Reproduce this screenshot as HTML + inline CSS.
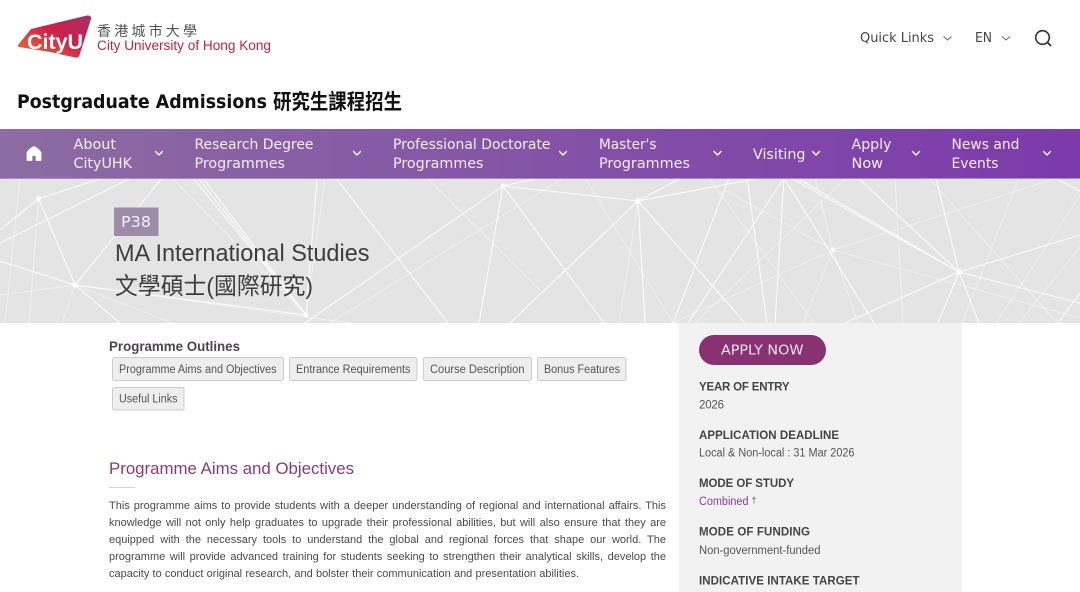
<!DOCTYPE html>
<html lang="en"><head><meta charset="utf-8"><title>MA International Studies</title>
<style>
html,body{margin:0;padding:0;background:#fff;width:1080px;height:592px;overflow:hidden}
svg{position:absolute;left:0;top:0;display:block}
.s{font-family:"Liberation Sans","Noto Sans CJK TC",sans-serif}
.m{font-family:"DejaVu Sans","Noto Sans CJK TC",sans-serif}
.n{font-family:"DejaVu Sans",sans-serif;font-size:14.5px;fill:#f4eef7}
.b{font-family:"Liberation Sans",sans-serif;font-size:11.5px;fill:#555}
.h{font-family:"Liberation Sans",sans-serif;font-size:11.5px;font-weight:700;fill:#444}
.v{font-family:"Liberation Sans",sans-serif;font-size:11.5px;fill:#555}
.c{fill:none;stroke:#fff;stroke-width:1.400;stroke-linecap:round;stroke-linejoin:round}
.p{position:absolute;left:109px;width:557px;height:17px;line-height:17px;font-family:"Liberation Sans",sans-serif;font-size:11px;color:#4a4a4a;white-space:nowrap;text-align:justify;text-align-last:justify}
</style></head><body>
<svg width="1080" height="592" viewBox="0 0 1080 592" xmlns="http://www.w3.org/2000/svg">
<defs>
<linearGradient id="lg" x1="0" y1="1" x2="1" y2="0"><stop offset="0" stop-color="#e8763a"/><stop offset=".55" stop-color="#cf2049"/><stop offset="1" stop-color="#a32f6d"/></linearGradient>
<linearGradient id="ng" x1="0" y1="0" x2="1" y2="0"><stop offset="0" stop-color="#8c6ca2"/><stop offset="1" stop-color="#7c3aab"/></linearGradient>
<clipPath id="hc"><rect x="0" y="179" width="1080" height="144"/></clipPath>
</defs>
<rect width="1080" height="592" fill="#fff"/>

<!-- logo -->
<path d="M18 45 L31 29 L87 15.500 Q91.500 15 91 19 L79.500 55 Q78.500 58.500 75 57.500 L50 52 L19 47 Q17 46 18 45Z" fill="url(#lg)"/>
<text class="s" x="27" y="49" font-size="21" font-weight="700" fill="#fff" textLength="56" lengthAdjust="spacingAndGlyphs">CityU</text>
<text class="s" x="97" y="36" font-size="14" fill="#555" textLength="100" lengthAdjust="spacing">香港城市大學</text>
<text class="s" x="97" y="50" font-size="13.500" fill="#c9213f" textLength="174" lengthAdjust="spacingAndGlyphs">City University of Hong Kong</text>

<!-- top links -->
<text class="m" x="860" y="42" font-size="13.500" fill="#444" textLength="74" lengthAdjust="spacingAndGlyphs">Quick Links</text>
<path d="M943.500 36.500l4 3.500 4-3.500" fill="none" stroke="#666" stroke-width="1"/>
<text class="m" x="975" y="42" font-size="13.500" fill="#444" textLength="17" lengthAdjust="spacingAndGlyphs">EN</text>
<path d="M1002 36.500l4 3.500 4-3.500" fill="none" stroke="#666" stroke-width="1"/>
<circle cx="1042.500" cy="37.500" r="6.800" fill="none" stroke="#333" stroke-width="1.600"/>
<path d="M1047.500 42.500l3.500 3.500" stroke="#333" stroke-width="1.800" fill="none"/>

<!-- title -->
<text class="m" x="17" y="108" font-size="19" font-weight="700" fill="#111" textLength="250" lengthAdjust="spacingAndGlyphs">Postgraduate Admissions</text>
<text class="s" x="273" y="109" font-size="21" font-weight="700" fill="#111" textLength="129" lengthAdjust="spacingAndGlyphs">研究生課程招生</text>

<!-- hero -->
<rect x="0" y="179" width="1080" height="144" fill="#e4e4e4"/>
<g clip-path="url(#hc)">
<g stroke="#fff" fill="none" stroke-width="1" stroke-opacity=".9">
<path d="M38.600 198.700L75 285M38.600 198.700L100 179M0 243L131 178M75 285L162 178M75 285L0 261M75 285L120 323M75 285L306 315M306 315L193 178M306 315L198 178M306 315L203 178M306 315L317 178M305 323L503 186M336 178L448 323M503 186L479 323M503 186L604 323M0 230L38.600 198.700"/>
<path d="M503 186L638 201M638 201L510 323M638 201L745 323M638 201L645 323M638 201L681 178M638 201L760 178M729 178L673 323M784 178L688 323M784 178L775 323M784 178L874 323M747 178L767 323M791 178L959 272M797 178L959 272M858 178L959 272M936 178L959 272M959 272L845 323M959 272L938 323M959 272L979 323M959 272L1080 235M959 272L1080 303M1080 293L1058 323M1055 178L1080 191M503 186L540 178"/>
</g>
<g stroke="#fff" fill="none" stroke-width="1" stroke-opacity=".45">
<path d="M38.600 198.700L29 323M75 285L62 323M75 285L172 323M0 295L75 285M172 178L306 315M306 315L325 178M427 178L540 290M330 323L600 155M20 178L5 323M75 285L350 323"/>
<path d="M846 178L695 323M709 178L814 323M585 178L673 323M895 178L903 323M833 250L726 191M833 250L673 323M833 250L1057 178M833 250L1080 318M833 250L803 323M833 250L815 178M833 250L858 323M929 178L1057 323M1019 178L962 323M1080 195L996 323M1080 247L1019 323M638 201L619 323"/>
</g>
<g fill="#fff"><circle cx="38.600" cy="198.700" r="2.500"/><circle cx="75" cy="285" r="2.500"/><circle cx="306" cy="315" r="2.500"/><circle cx="503" cy="186" r="2.500"/><circle cx="638" cy="201" r="2.800"/><circle cx="959" cy="272" r="2.800"/><circle cx="833" cy="250" r="2.500" fill-opacity=".5"/></g>
</g>

<!-- nav -->
<rect x="0" y="129" width="1080" height="49" fill="url(#ng)"/>
<rect x="0" y="178" width="1080" height="1" fill="#a98cc4"/>
<path d="M34 146.500Q30 148 27 152.500V160.500H32V155.500H36V160.500H41V152.500Q38 148 34 146.500Z" fill="#fff" stroke="#fff" stroke-width=".8" stroke-linejoin="round"/>
<text class="n" x="73.500" y="149" textLength="42.500" lengthAdjust="spacingAndGlyphs">About</text>
<text class="n" x="73.500" y="168" textLength="58.500" lengthAdjust="spacingAndGlyphs">CityUHK</text>
<path class="c" d="M155.500 151.500l3.500 3.500 3.500-3.500"/>
<text class="n" x="194.500" y="149" textLength="119" lengthAdjust="spacingAndGlyphs">Research Degree</text>
<text class="n" x="194.500" y="168" textLength="90.500" lengthAdjust="spacingAndGlyphs">Programmes</text>
<path class="c" d="M353.500 151.500l3.500 3.500 3.500-3.500"/>
<text class="n" x="393" y="149" textLength="157.500" lengthAdjust="spacingAndGlyphs">Professional Doctorate</text>
<text class="n" x="393" y="168" textLength="90.500" lengthAdjust="spacingAndGlyphs">Programmes</text>
<path class="c" d="M559.500 151.500l3.500 3.500 3.500-3.500"/>
<text class="n" x="599" y="149" textLength="57.500" lengthAdjust="spacingAndGlyphs">Master's</text>
<text class="n" x="599" y="168" textLength="91" lengthAdjust="spacingAndGlyphs">Programmes</text>
<path class="c" d="M714 151.500l3.500 3.500 3.500-3.500"/>
<text class="n" x="753" y="159" textLength="52.500" lengthAdjust="spacingAndGlyphs">Visiting</text>
<path class="c" d="M812.500 151.500l3.500 3.500 3.500-3.500"/>
<text class="n" x="851.500" y="149" textLength="40" lengthAdjust="spacingAndGlyphs">Apply</text>
<text class="n" x="851.500" y="168" textLength="31.500" lengthAdjust="spacingAndGlyphs">Now</text>
<path class="c" d="M912.500 151.500l3.500 3.500 3.500-3.500"/>
<text class="n" x="951.500" y="149" textLength="68" lengthAdjust="spacingAndGlyphs">News and</text>
<text class="n" x="951.500" y="168" textLength="47" lengthAdjust="spacingAndGlyphs">Events</text>
<path class="c" d="M1043.500 151.500l3.500 3.500 3.500-3.500"/>

<!-- hero text -->
<rect x="114" y="207.500" width="44.500" height="28.500" fill="#9d8ca8"/>
<text class="m" x="121" y="227" font-size="15.500" fill="#f4f0f6" textLength="30" lengthAdjust="spacingAndGlyphs">P38</text>
<text class="s" x="115" y="261" font-size="24" fill="#3d3d3d" textLength="254.500" lengthAdjust="spacingAndGlyphs">MA International Studies</text>
<text class="s" x="115" y="294" font-size="23.500" fill="#3d3d3d" textLength="198" lengthAdjust="spacingAndGlyphs">文學碩士(國際研究)</text>

<!-- sidebar -->
<rect x="679" y="323" width="283" height="269" fill="#f2f2f2"/>
<rect x="699" y="335" width="127" height="30" rx="15" fill="#883273"/>
<text class="m" x="721" y="354.500" font-size="13" fill="#efe3ee" textLength="82.500" lengthAdjust="spacingAndGlyphs">APPLY NOW</text>
<text class="h" x="699" y="390.500" textLength="90.500" lengthAdjust="spacing">YEAR OF ENTRY</text>
<text class="v" x="699" y="408.500" textLength="25" lengthAdjust="spacing">2026</text>
<text class="h" x="699" y="439" textLength="140" lengthAdjust="spacing">APPLICATION DEADLINE</text>
<text class="v" x="699" y="456.500" textLength="155.500" lengthAdjust="spacingAndGlyphs">Local &amp; Non-local : 31 Mar 2026</text>
<text class="h" x="699" y="487" textLength="95" lengthAdjust="spacing">MODE OF STUDY</text>
<text class="v" x="699" y="505" style="fill:#8e3aa5" textLength="49.500" lengthAdjust="spacingAndGlyphs">Combined</text>
<text class="v" x="751.500" y="503" style="fill:#8e3aa5;font-size:9px">†</text>
<text class="h" x="699" y="535.500" textLength="111" lengthAdjust="spacing">MODE OF FUNDING</text>
<text class="v" x="699" y="554" textLength="121.500" lengthAdjust="spacingAndGlyphs">Non-government-funded</text>
<text class="h" x="699" y="584.500" textLength="160.500" lengthAdjust="spacing">INDICATIVE INTAKE TARGET</text>

<!-- outlines -->
<text class="s" x="109" y="351" font-size="14" font-weight="700" fill="#4e4450" textLength="131" lengthAdjust="spacingAndGlyphs">Programme Outlines</text>
<g fill="#eee" stroke="#ccc">
<rect x="112.500" y="357.500" width="171" height="23" rx="2"/>
<rect x="289.500" y="357.500" width="127.500" height="23" rx="2"/>
<rect x="423.500" y="357.500" width="108" height="23" rx="2"/>
<rect x="537.500" y="357.500" width="88.500" height="23" rx="2"/>
<rect x="112.500" y="387.500" width="71.500" height="22.500" rx="2"/>
</g>
<text class="b" x="119" y="373" textLength="157.500" lengthAdjust="spacingAndGlyphs">Programme Aims and Objectives</text>
<text class="b" x="296" y="373" textLength="114.500" lengthAdjust="spacingAndGlyphs">Entrance Requirements</text>
<text class="b" x="430" y="373" textLength="94.500" lengthAdjust="spacingAndGlyphs">Course Description</text>
<text class="b" x="544" y="373" textLength="76" lengthAdjust="spacingAndGlyphs">Bonus Features</text>
<text class="b" x="119" y="402.500" textLength="58.500" lengthAdjust="spacingAndGlyphs">Useful Links</text>

<text class="s" x="109" y="474" font-size="17" fill="#8a3a7a" textLength="245" lengthAdjust="spacingAndGlyphs">Programme Aims and Objectives</text>
<rect x="109" y="487" width="26" height="1" fill="#dccfdc"/>
</svg>
<div class="p" style="top:498px">This programme aims to provide students with a deeper understanding of regional and international affairs. This</div>
<div class="p" style="top:515px">knowledge will not only help graduates to upgrade their professional abilities, but will also ensure that they are</div>
<div class="p" style="top:532px">equipped with the necessary tools to understand the global and regional forces that shape our world. The</div>
<div class="p" style="top:549px">programme will provide advanced training for students seeking to strengthen their analytical skills, develop the</div>
<div class="p" style="top:566px;width:470px">capacity to conduct original research, and bolster their communication and presentation abilities.</div>
</body></html>
